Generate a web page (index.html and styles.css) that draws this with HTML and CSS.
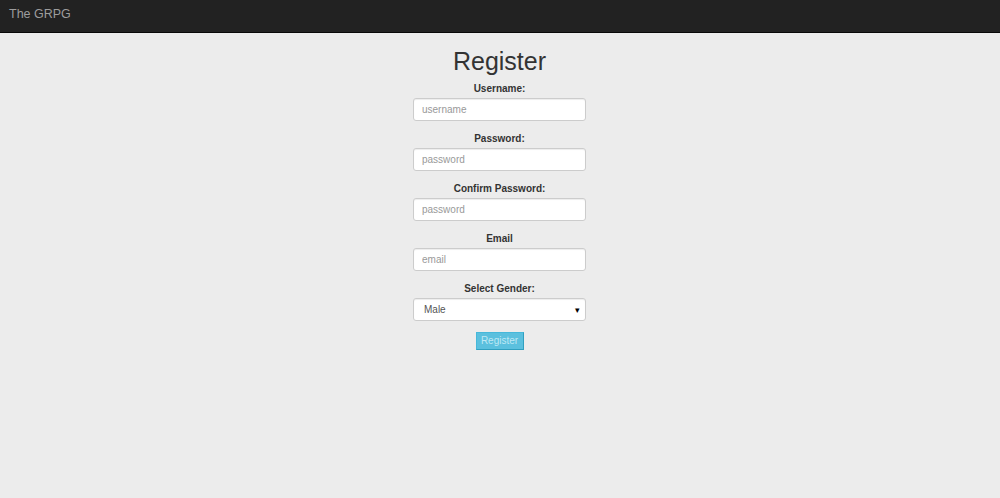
FILE: index.html
```html
<!DOCTYPE html>
<html>
<head>
<meta charset="utf-8">
<link rel="stylesheet" href="styles.css">
</head>
<body>
<nav class="navbar"><span class="brand">The GRPG</span></nav>
<main class="page">
  <h1 class="title">Register</h1>
  <form class="form">
    <div class="group">
      <label class="label">Username:</label>
      <input class="field" type="text" placeholder="username">
    </div>
    <div class="group">
      <label class="label">Password:</label>
      <input class="field" type="password" placeholder="password">
    </div>
    <div class="group">
      <label class="label">Confirm Password:</label>
      <input class="field" type="password" placeholder="password">
    </div>
    <div class="group">
      <label class="label">Email</label>
      <input class="field" type="text" placeholder="email">
    </div>
    <div class="group">
      <label class="label">Select Gender:</label>
      <div class="select"><span class="select-text">Male</span><span class="arrow">▾</span></div>
    </div>
    <button class="btn" type="button">Register</button>
  </form>
</main>
</body>
</html>
```
FILE: styles.css
```css
html, body {
  margin: 0;
  padding: 0;
}
body {
  background: #ececec;
  font-family: "Liberation Sans", Arial, sans-serif;
  color: #333;
  height: 498px;
  overflow: hidden;
}
.navbar {
  height: 32px;
  background: #222;
  border-bottom: 1px solid #080808;
  display: flex;
  align-items: center;
  padding-left: 9px;
}
.brand {
  color: #9d9d9d;
  font-size: 12.5px;
  line-height: 1;
  margin-top: -3px;
}
.page {
  display: flex;
  flex-direction: column;
  align-items: center;
  padding-right: 1px;
}
.title {
  font-size: 25px;
  font-weight: normal;
  line-height: 28px;
  margin: 14px 0 0;
  color: #333;
}
.form {
  display: flex;
  flex-direction: column;
  align-items: center;
  margin-top: 7px;
  width: 173px;
}
.group {
  display: flex;
  flex-direction: column;
  align-items: center;
  width: 100%;
  margin-bottom: 11px;
}
.label {
  font-weight: bold;
  font-size: 10px;
  line-height: 14px;
  margin-bottom: 2px;
  color: #333;
}
.field, .select {
  box-sizing: border-box;
  width: 173px;
  height: 23px;
  border: 1px solid #ccc;
  border-radius: 3px;
  background: #fff;
  box-shadow: inset 0 1px 1px rgba(0,0,0,0.075);
  padding: 0 8px;
  font-family: "Liberation Sans", Arial, sans-serif;
  font-size: 10px;
  color: #555;
  outline: none;
}
.field::placeholder {
  color: #999;
}
.select {
  display: flex;
  align-items: center;
  justify-content: space-between;
  padding: 0 5px 0 10px;
}
.select-text {
  color: #555;
}
.arrow {
  font-size: 9px;
  color: #000;
}
.btn {
  width: 48px;
  height: 18px;
  padding: 0;
  background: #5bc0de;
  border: 1px solid #46b8da;
  border-right-color: #31a0c0;
  border-bottom-color: #31a0c0;
  border-radius: 0;
  color: #bfe8f4;
  font-family: "Liberation Sans", Arial, sans-serif;
  font-size: 10px;
  line-height: 16px;
}
```
